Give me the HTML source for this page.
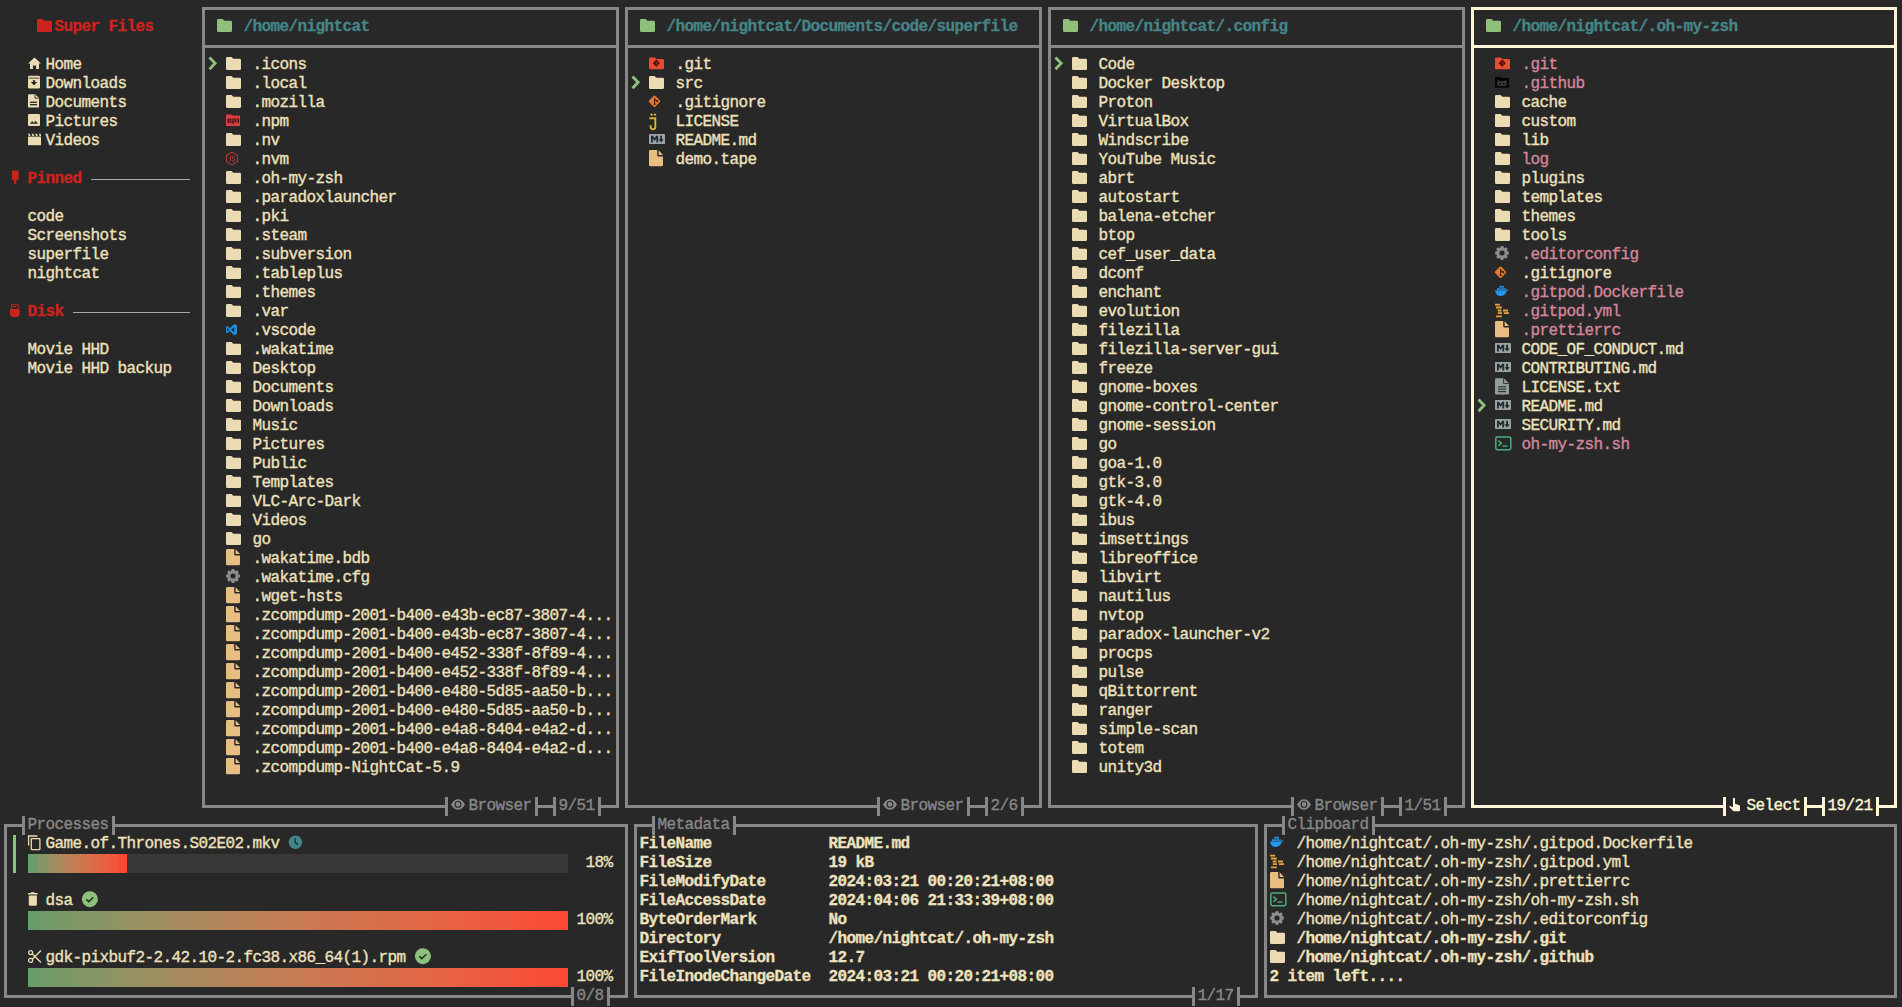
<!DOCTYPE html>
<html><head><meta charset="utf-8"><style>
html,body{margin:0;padding:0;background:#282828;}
body{width:1902px;height:1007px;overflow:hidden;position:relative;}
.t{position:absolute;font-family:"Liberation Mono",monospace;font-size:16px;letter-spacing:-0.6px;line-height:19px;white-space:pre;-webkit-text-stroke:0.35px currentColor;}
.b{font-weight:bold;-webkit-text-stroke:0.3px currentColor;}
.r{position:absolute;}
.i{position:absolute;overflow:visible;}
</style></head><body>
<svg class="i" style="left:34px;top:15px" width="24" height="24"><g transform="translate(3 3)"><path d="M0 2.3Q0 1 1.3 1H5.6L7.3 2.8H13.7Q15 2.8 15 4.1V12.7Q15 14 13.7 14H1.3Q0 14 0 12.7Z" fill="#cc241d"/></g></svg><div class="t b" style="left:54.5px;top:18px;color:#cc241d;">Super Files</div><svg class="i" style="left:25px;top:53px" width="24" height="24"><g transform="translate(3 3)"><path d="M6.5 1.5L13 7.6H11V13H8.1V9.6H4.9V13H2V7.6H0Z" fill="#ebdbb2"/></g></svg><div class="t" style="left:45.5px;top:56px;color:#eee1bd;">Home</div><svg class="i" style="left:25px;top:72px" width="24" height="24"><g transform="translate(3 3)"><path d="M1.2 0.8H10.8Q12 0.8 12 2V12.3Q12 13.5 10.8 13.5H1.2Q0 13.5 0 12.3V2Q0 0.8 1.2 0.8Z" fill="#ebdbb2"/><rect x="0.6" y="2.7" width="10.8" height="0.8" fill="#282828"/><path d="M2.8 7H9.2L6 10.4Z" fill="#282828"/><rect x="4.9" y="5.2" width="2.2" height="2.4" fill="#282828"/></g></svg><div class="t" style="left:45.5px;top:75px;color:#eee1bd;">Downloads</div><svg class="i" style="left:25px;top:91px" width="24" height="24"><g transform="translate(3 3)"><path d="M1.2 0.2H7.2L11 4V12.4Q11 13.6 9.8 13.6H1.2Q0 13.6 0 12.4V1.4Q0 0.2 1.2 0.2Z" fill="#ebdbb2"/><path d="M7 0.6V4.2H10.6" fill="none" stroke="#282828" stroke-width="0.9"/><rect x="2" y="7.6" width="7" height="1.3" fill="#282828"/><rect x="2" y="10" width="7" height="1.3" fill="#282828"/></g></svg><div class="t" style="left:45.5px;top:94px;color:#eee1bd;">Documents</div><svg class="i" style="left:25px;top:110px" width="24" height="24"><g transform="translate(3 3)"><path d="M1.2 1H10.8Q12 1 12 2.2V11.8Q12 13 10.8 13H1.2Q0 13 0 11.8V2.2Q0 1 1.2 1Z" fill="#ebdbb2"/><path d="M2 10.8L4.2 8L5.8 10L7.6 7.8L10 10.8Z" fill="#282828"/></g></svg><div class="t" style="left:45.5px;top:113px;color:#eee1bd;">Pictures</div><svg class="i" style="left:25px;top:129px" width="24" height="24"><g transform="translate(3 3)"><rect x="0" y="4.6" width="13" height="8.6" fill="#ebdbb2"/><path d="M0 1.8H1.8L2.6 4H0.8ZM3.6 1.8H5.4L6.2 4H4.4ZM7.2 1.8H9L9.8 4H8ZM10.8 1.8H12.6L13 3V4H11.6Z" fill="#ebdbb2"/></g></svg><div class="t" style="left:45.5px;top:132px;color:#eee1bd;">Videos</div><svg class="i" style="left:7px;top:167px" width="24" height="24"><g transform="translate(3 3)"><path d="M2 0.5H8.6V7.8L9.2 9.8H1.2L2 7.8Z" fill="#cc241d"/><rect x="3.9" y="9.8" width="2.4" height="4" fill="#cc241d"/></g></svg><div class="t b" style="left:27.5px;top:170px;color:#cc241d;">Pinned</div><div class="r" style="left:91px;top:179px;width:99px;height:1px;background:#a8a8a8;"></div><div class="t" style="left:27.5px;top:208px;color:#eee1bd;">code</div><div class="t" style="left:27.5px;top:227px;color:#eee1bd;">Screenshots</div><div class="t" style="left:27.5px;top:246px;color:#eee1bd;">superfile</div><div class="t" style="left:27.5px;top:265px;color:#eee1bd;">nightcat</div><svg class="i" style="left:7px;top:300px" width="24" height="24"><g transform="translate(3 3)"><path d="M1.1 1.2H8.5V6.2H9.6V10.6Q9.6 14.2 4.8 14.2Q0 14.2 0 10.6V6.2H1.1Z" fill="#cc241d"/><rect x="2.3" y="2.3" width="5" height="3.6" fill="#3c0c0c"/><circle cx="3.9" cy="3.7" r="0.55" fill="#c99"/><circle cx="5.7" cy="3.7" r="0.55" fill="#c99"/></g></svg><div class="t b" style="left:27.5px;top:303px;color:#cc241d;">Disk</div><div class="r" style="left:73px;top:312px;width:117px;height:1px;background:#a8a8a8;"></div><div class="t" style="left:27.5px;top:341px;color:#eee1bd;">Movie HHD</div><div class="t" style="left:27.5px;top:360px;color:#eee1bd;">Movie HHD backup</div><div class="r" style="left:202px;top:7px;width:417px;height:3px;background:#878787;"></div><div class="r" style="left:202px;top:45px;width:417px;height:3px;background:#878787;"></div><div class="r" style="left:202px;top:7px;width:3px;height:801px;background:#878787;"></div><div class="r" style="left:616px;top:7px;width:3px;height:801px;background:#878787;"></div><svg class="i" style="left:214px;top:15px" width="24" height="24"><g transform="translate(3 3)"><path d="M0 2.3Q0 1 1.3 1H5.6L7.3 2.8H13.7Q15 2.8 15 4.1V12.7Q15 14 13.7 14H1.3Q0 14 0 12.7Z" fill="#8ec07c"/></g></svg><div class="t b" style="left:243.5px;top:18px;color:#458588;">/home/nightcat</div><svg class="i" style="left:205px;top:53px" width="24" height="24"><g transform="translate(3 3)"><path d="M1.5 1.4L7.1 7.3L1.5 13.2" fill="none" stroke="#8ec07c" stroke-width="2.9" stroke-linejoin="miter"/></g></svg><svg class="i" style="left:223px;top:53px" width="24" height="24"><g transform="translate(3 3)"><path d="M0 2.3Q0 1 1.3 1H5.6L7.3 2.8H13.7Q15 2.8 15 4.1V12.7Q15 14 13.7 14H1.3Q0 14 0 12.7Z" fill="#ebdbb2"/></g></svg><div class="t" style="left:252.5px;top:56px;color:#eee1bd;">.icons</div><svg class="i" style="left:223px;top:72px" width="24" height="24"><g transform="translate(3 3)"><path d="M0 2.3Q0 1 1.3 1H5.6L7.3 2.8H13.7Q15 2.8 15 4.1V12.7Q15 14 13.7 14H1.3Q0 14 0 12.7Z" fill="#ebdbb2"/></g></svg><div class="t" style="left:252.5px;top:75px;color:#eee1bd;">.local</div><svg class="i" style="left:223px;top:91px" width="24" height="24"><g transform="translate(3 3)"><path d="M0 2.3Q0 1 1.3 1H5.6L7.3 2.8H13.7Q15 2.8 15 4.1V12.7Q15 14 13.7 14H1.3Q0 14 0 12.7Z" fill="#ebdbb2"/></g></svg><div class="t" style="left:252.5px;top:94px;color:#eee1bd;">.mozilla</div><svg class="i" style="left:223px;top:110px" width="24" height="24"><g transform="translate(3 3)"><path d="M0 1.5H5.5L6.5 2.6H14V13H0Z" fill="#d84040"/><path d="M1.5 5.5H5.5V10H4.3V6.6H3.7V10H1.5ZM6.2 5.5H10V9H8.2V10.8H6.2ZM7.6 6.6V8H8.6V6.6ZM10.6 5.5H13V10H12V6.6H11.6V10H10.6Z" fill="#5b1515"/></g></svg><div class="t" style="left:252.5px;top:113px;color:#eee1bd;">.npm</div><svg class="i" style="left:223px;top:129px" width="24" height="24"><g transform="translate(3 3)"><path d="M0 2.3Q0 1 1.3 1H5.6L7.3 2.8H13.7Q15 2.8 15 4.1V12.7Q15 14 13.7 14H1.3Q0 14 0 12.7Z" fill="#ebdbb2"/></g></svg><div class="t" style="left:252.5px;top:132px;color:#eee1bd;">.nv</div><svg class="i" style="left:223px;top:148px" width="24" height="24"><g transform="translate(3 3)"><path d="M6 1.2L11.5 4.3V10.8L6 13.9L0.5 10.8V4.3Z" fill="none" stroke="#b03a3a" stroke-width="1.1"/><path d="M4.4 5V9.2Q4.4 10.3 3.2 10.2M8.8 5.4H7.1Q6.3 5.4 6.3 6.2V6.9Q6.3 7.6 7.1 7.6H7.9Q8.7 7.6 8.7 8.4V9.3Q8.7 10.1 7.9 10.1H6.2" fill="none" stroke="#b03a3a" stroke-width="1"/></g></svg><div class="t" style="left:252.5px;top:151px;color:#eee1bd;">.nvm</div><svg class="i" style="left:223px;top:167px" width="24" height="24"><g transform="translate(3 3)"><path d="M0 2.3Q0 1 1.3 1H5.6L7.3 2.8H13.7Q15 2.8 15 4.1V12.7Q15 14 13.7 14H1.3Q0 14 0 12.7Z" fill="#ebdbb2"/></g></svg><div class="t" style="left:252.5px;top:170px;color:#eee1bd;">.oh-my-zsh</div><svg class="i" style="left:223px;top:186px" width="24" height="24"><g transform="translate(3 3)"><path d="M0 2.3Q0 1 1.3 1H5.6L7.3 2.8H13.7Q15 2.8 15 4.1V12.7Q15 14 13.7 14H1.3Q0 14 0 12.7Z" fill="#ebdbb2"/></g></svg><div class="t" style="left:252.5px;top:189px;color:#eee1bd;">.paradoxlauncher</div><svg class="i" style="left:223px;top:205px" width="24" height="24"><g transform="translate(3 3)"><path d="M0 2.3Q0 1 1.3 1H5.6L7.3 2.8H13.7Q15 2.8 15 4.1V12.7Q15 14 13.7 14H1.3Q0 14 0 12.7Z" fill="#ebdbb2"/></g></svg><div class="t" style="left:252.5px;top:208px;color:#eee1bd;">.pki</div><svg class="i" style="left:223px;top:224px" width="24" height="24"><g transform="translate(3 3)"><path d="M0 2.3Q0 1 1.3 1H5.6L7.3 2.8H13.7Q15 2.8 15 4.1V12.7Q15 14 13.7 14H1.3Q0 14 0 12.7Z" fill="#ebdbb2"/></g></svg><div class="t" style="left:252.5px;top:227px;color:#eee1bd;">.steam</div><svg class="i" style="left:223px;top:243px" width="24" height="24"><g transform="translate(3 3)"><path d="M0 2.3Q0 1 1.3 1H5.6L7.3 2.8H13.7Q15 2.8 15 4.1V12.7Q15 14 13.7 14H1.3Q0 14 0 12.7Z" fill="#ebdbb2"/></g></svg><div class="t" style="left:252.5px;top:246px;color:#eee1bd;">.subversion</div><svg class="i" style="left:223px;top:262px" width="24" height="24"><g transform="translate(3 3)"><path d="M0 2.3Q0 1 1.3 1H5.6L7.3 2.8H13.7Q15 2.8 15 4.1V12.7Q15 14 13.7 14H1.3Q0 14 0 12.7Z" fill="#ebdbb2"/></g></svg><div class="t" style="left:252.5px;top:265px;color:#eee1bd;">.tableplus</div><svg class="i" style="left:223px;top:281px" width="24" height="24"><g transform="translate(3 3)"><path d="M0 2.3Q0 1 1.3 1H5.6L7.3 2.8H13.7Q15 2.8 15 4.1V12.7Q15 14 13.7 14H1.3Q0 14 0 12.7Z" fill="#ebdbb2"/></g></svg><div class="t" style="left:252.5px;top:284px;color:#eee1bd;">.themes</div><svg class="i" style="left:223px;top:300px" width="24" height="24"><g transform="translate(3 3)"><path d="M0 2.3Q0 1 1.3 1H5.6L7.3 2.8H13.7Q15 2.8 15 4.1V12.7Q15 14 13.7 14H1.3Q0 14 0 12.7Z" fill="#ebdbb2"/></g></svg><div class="t" style="left:252.5px;top:303px;color:#eee1bd;">.var</div><svg class="i" style="left:223px;top:319px" width="24" height="24"><g transform="translate(3 3)"><path d="M8.2 2L11 3.3V12L8.2 13.3L3.8 9.3L1.3 11.2L0 10.5V4.8L1.3 4.1L3.8 6ZM1.3 5.9V9.4L3.2 7.65ZM8.2 5.1L5.4 7.65L8.2 10.2Z" fill="#1f8ad8" fill-rule="evenodd"/></g></svg><div class="t" style="left:252.5px;top:322px;color:#eee1bd;">.vscode</div><svg class="i" style="left:223px;top:338px" width="24" height="24"><g transform="translate(3 3)"><path d="M0 2.3Q0 1 1.3 1H5.6L7.3 2.8H13.7Q15 2.8 15 4.1V12.7Q15 14 13.7 14H1.3Q0 14 0 12.7Z" fill="#ebdbb2"/></g></svg><div class="t" style="left:252.5px;top:341px;color:#eee1bd;">.wakatime</div><svg class="i" style="left:223px;top:357px" width="24" height="24"><g transform="translate(3 3)"><path d="M0 2.3Q0 1 1.3 1H5.6L7.3 2.8H13.7Q15 2.8 15 4.1V12.7Q15 14 13.7 14H1.3Q0 14 0 12.7Z" fill="#ebdbb2"/></g></svg><div class="t" style="left:252.5px;top:360px;color:#eee1bd;">Desktop</div><svg class="i" style="left:223px;top:376px" width="24" height="24"><g transform="translate(3 3)"><path d="M0 2.3Q0 1 1.3 1H5.6L7.3 2.8H13.7Q15 2.8 15 4.1V12.7Q15 14 13.7 14H1.3Q0 14 0 12.7Z" fill="#ebdbb2"/></g></svg><div class="t" style="left:252.5px;top:379px;color:#eee1bd;">Documents</div><svg class="i" style="left:223px;top:395px" width="24" height="24"><g transform="translate(3 3)"><path d="M0 2.3Q0 1 1.3 1H5.6L7.3 2.8H13.7Q15 2.8 15 4.1V12.7Q15 14 13.7 14H1.3Q0 14 0 12.7Z" fill="#ebdbb2"/></g></svg><div class="t" style="left:252.5px;top:398px;color:#eee1bd;">Downloads</div><svg class="i" style="left:223px;top:414px" width="24" height="24"><g transform="translate(3 3)"><path d="M0 2.3Q0 1 1.3 1H5.6L7.3 2.8H13.7Q15 2.8 15 4.1V12.7Q15 14 13.7 14H1.3Q0 14 0 12.7Z" fill="#ebdbb2"/></g></svg><div class="t" style="left:252.5px;top:417px;color:#eee1bd;">Music</div><svg class="i" style="left:223px;top:433px" width="24" height="24"><g transform="translate(3 3)"><path d="M0 2.3Q0 1 1.3 1H5.6L7.3 2.8H13.7Q15 2.8 15 4.1V12.7Q15 14 13.7 14H1.3Q0 14 0 12.7Z" fill="#ebdbb2"/></g></svg><div class="t" style="left:252.5px;top:436px;color:#eee1bd;">Pictures</div><svg class="i" style="left:223px;top:452px" width="24" height="24"><g transform="translate(3 3)"><path d="M0 2.3Q0 1 1.3 1H5.6L7.3 2.8H13.7Q15 2.8 15 4.1V12.7Q15 14 13.7 14H1.3Q0 14 0 12.7Z" fill="#ebdbb2"/></g></svg><div class="t" style="left:252.5px;top:455px;color:#eee1bd;">Public</div><svg class="i" style="left:223px;top:471px" width="24" height="24"><g transform="translate(3 3)"><path d="M0 2.3Q0 1 1.3 1H5.6L7.3 2.8H13.7Q15 2.8 15 4.1V12.7Q15 14 13.7 14H1.3Q0 14 0 12.7Z" fill="#ebdbb2"/></g></svg><div class="t" style="left:252.5px;top:474px;color:#eee1bd;">Templates</div><svg class="i" style="left:223px;top:490px" width="24" height="24"><g transform="translate(3 3)"><path d="M0 2.3Q0 1 1.3 1H5.6L7.3 2.8H13.7Q15 2.8 15 4.1V12.7Q15 14 13.7 14H1.3Q0 14 0 12.7Z" fill="#ebdbb2"/></g></svg><div class="t" style="left:252.5px;top:493px;color:#eee1bd;">VLC-Arc-Dark</div><svg class="i" style="left:223px;top:509px" width="24" height="24"><g transform="translate(3 3)"><path d="M0 2.3Q0 1 1.3 1H5.6L7.3 2.8H13.7Q15 2.8 15 4.1V12.7Q15 14 13.7 14H1.3Q0 14 0 12.7Z" fill="#ebdbb2"/></g></svg><div class="t" style="left:252.5px;top:512px;color:#eee1bd;">Videos</div><svg class="i" style="left:223px;top:528px" width="24" height="24"><g transform="translate(3 3)"><path d="M0 2.3Q0 1 1.3 1H5.6L7.3 2.8H13.7Q15 2.8 15 4.1V12.7Q15 14 13.7 14H1.3Q0 14 0 12.7Z" fill="#ebdbb2"/></g></svg><div class="t" style="left:252.5px;top:531px;color:#eee1bd;">go</div><svg class="i" style="left:223px;top:547px" width="24" height="24"><g transform="translate(3 3)"><path d="M0 0.2Q0 -1 1.2 -1H8.2V4.2Q8.2 5.4 9.4 5.4H14V14.1Q14 15.3 12.8 15.3H1.2Q0 15.3 0 14.1Z" fill="#e8bd82"/><path d="M9.6 -0.8L14 3.9H9.6Z" fill="#e8bd82"/></g></svg><div class="t" style="left:252.5px;top:550px;color:#eee1bd;">.wakatime.bdb</div><svg class="i" style="left:223px;top:566px" width="24" height="24"><g transform="translate(3 3)"><path d="M11.94 5.07 L13.89 5.77 L13.89 8.23 L11.94 8.93 L11.86 9.12 L12.74 11.00 L11.00 12.74 L9.12 11.86 L8.93 11.94 L8.23 13.89 L5.77 13.89 L5.07 11.94 L4.88 11.86 L3.00 12.74 L1.26 11.00 L2.14 9.12 L2.06 8.93 L0.11 8.23 L0.11 5.77 L2.06 5.07 L2.14 4.88 L1.26 3.00 L3.00 1.26 L4.88 2.14 L5.07 2.06 L5.77 0.11 L8.23 0.11 L8.93 2.06 L9.12 2.14 L11.00 1.26 L12.74 3.00 L11.86 4.88Z" fill="#8c8c8c"/><circle cx="7" cy="7" r="2.6" fill="#282828"/></g></svg><div class="t" style="left:252.5px;top:569px;color:#eee1bd;">.wakatime.cfg</div><svg class="i" style="left:223px;top:585px" width="24" height="24"><g transform="translate(3 3)"><path d="M0 0.2Q0 -1 1.2 -1H8.2V4.2Q8.2 5.4 9.4 5.4H14V14.1Q14 15.3 12.8 15.3H1.2Q0 15.3 0 14.1Z" fill="#e8bd82"/><path d="M9.6 -0.8L14 3.9H9.6Z" fill="#e8bd82"/></g></svg><div class="t" style="left:252.5px;top:588px;color:#eee1bd;">.wget-hsts</div><svg class="i" style="left:223px;top:604px" width="24" height="24"><g transform="translate(3 3)"><path d="M0 0.2Q0 -1 1.2 -1H8.2V4.2Q8.2 5.4 9.4 5.4H14V14.1Q14 15.3 12.8 15.3H1.2Q0 15.3 0 14.1Z" fill="#e8bd82"/><path d="M9.6 -0.8L14 3.9H9.6Z" fill="#e8bd82"/></g></svg><div class="t" style="left:252.5px;top:607px;color:#eee1bd;">.zcompdump-2001-b400-e43b-ec87-3807-4...</div><svg class="i" style="left:223px;top:623px" width="24" height="24"><g transform="translate(3 3)"><path d="M0 0.2Q0 -1 1.2 -1H8.2V4.2Q8.2 5.4 9.4 5.4H14V14.1Q14 15.3 12.8 15.3H1.2Q0 15.3 0 14.1Z" fill="#e8bd82"/><path d="M9.6 -0.8L14 3.9H9.6Z" fill="#e8bd82"/></g></svg><div class="t" style="left:252.5px;top:626px;color:#eee1bd;">.zcompdump-2001-b400-e43b-ec87-3807-4...</div><svg class="i" style="left:223px;top:642px" width="24" height="24"><g transform="translate(3 3)"><path d="M0 0.2Q0 -1 1.2 -1H8.2V4.2Q8.2 5.4 9.4 5.4H14V14.1Q14 15.3 12.8 15.3H1.2Q0 15.3 0 14.1Z" fill="#e8bd82"/><path d="M9.6 -0.8L14 3.9H9.6Z" fill="#e8bd82"/></g></svg><div class="t" style="left:252.5px;top:645px;color:#eee1bd;">.zcompdump-2001-b400-e452-338f-8f89-4...</div><svg class="i" style="left:223px;top:661px" width="24" height="24"><g transform="translate(3 3)"><path d="M0 0.2Q0 -1 1.2 -1H8.2V4.2Q8.2 5.4 9.4 5.4H14V14.1Q14 15.3 12.8 15.3H1.2Q0 15.3 0 14.1Z" fill="#e8bd82"/><path d="M9.6 -0.8L14 3.9H9.6Z" fill="#e8bd82"/></g></svg><div class="t" style="left:252.5px;top:664px;color:#eee1bd;">.zcompdump-2001-b400-e452-338f-8f89-4...</div><svg class="i" style="left:223px;top:680px" width="24" height="24"><g transform="translate(3 3)"><path d="M0 0.2Q0 -1 1.2 -1H8.2V4.2Q8.2 5.4 9.4 5.4H14V14.1Q14 15.3 12.8 15.3H1.2Q0 15.3 0 14.1Z" fill="#e8bd82"/><path d="M9.6 -0.8L14 3.9H9.6Z" fill="#e8bd82"/></g></svg><div class="t" style="left:252.5px;top:683px;color:#eee1bd;">.zcompdump-2001-b400-e480-5d85-aa50-b...</div><svg class="i" style="left:223px;top:699px" width="24" height="24"><g transform="translate(3 3)"><path d="M0 0.2Q0 -1 1.2 -1H8.2V4.2Q8.2 5.4 9.4 5.4H14V14.1Q14 15.3 12.8 15.3H1.2Q0 15.3 0 14.1Z" fill="#e8bd82"/><path d="M9.6 -0.8L14 3.9H9.6Z" fill="#e8bd82"/></g></svg><div class="t" style="left:252.5px;top:702px;color:#eee1bd;">.zcompdump-2001-b400-e480-5d85-aa50-b...</div><svg class="i" style="left:223px;top:718px" width="24" height="24"><g transform="translate(3 3)"><path d="M0 0.2Q0 -1 1.2 -1H8.2V4.2Q8.2 5.4 9.4 5.4H14V14.1Q14 15.3 12.8 15.3H1.2Q0 15.3 0 14.1Z" fill="#e8bd82"/><path d="M9.6 -0.8L14 3.9H9.6Z" fill="#e8bd82"/></g></svg><div class="t" style="left:252.5px;top:721px;color:#eee1bd;">.zcompdump-2001-b400-e4a8-8404-e4a2-d...</div><svg class="i" style="left:223px;top:737px" width="24" height="24"><g transform="translate(3 3)"><path d="M0 0.2Q0 -1 1.2 -1H8.2V4.2Q8.2 5.4 9.4 5.4H14V14.1Q14 15.3 12.8 15.3H1.2Q0 15.3 0 14.1Z" fill="#e8bd82"/><path d="M9.6 -0.8L14 3.9H9.6Z" fill="#e8bd82"/></g></svg><div class="t" style="left:252.5px;top:740px;color:#eee1bd;">.zcompdump-2001-b400-e4a8-8404-e4a2-d...</div><svg class="i" style="left:223px;top:756px" width="24" height="24"><g transform="translate(3 3)"><path d="M0 0.2Q0 -1 1.2 -1H8.2V4.2Q8.2 5.4 9.4 5.4H14V14.1Q14 15.3 12.8 15.3H1.2Q0 15.3 0 14.1Z" fill="#e8bd82"/><path d="M9.6 -0.8L14 3.9H9.6Z" fill="#e8bd82"/></g></svg><div class="t" style="left:252.5px;top:759px;color:#eee1bd;">.zcompdump-NightCat-5.9</div><div class="r" style="left:202px;top:805px;width:246px;height:3px;background:#878787;"></div><div class="r" style="left:535px;top:805px;width:21px;height:3px;background:#878787;"></div><div class="r" style="left:598px;top:805px;width:21px;height:3px;background:#878787;"></div><div class="r" style="left:445px;top:797px;width:3px;height:19px;background:#878787;"></div><div class="r" style="left:535px;top:797px;width:3px;height:19px;background:#878787;"></div><div class="r" style="left:553px;top:797px;width:3px;height:19px;background:#878787;"></div><div class="r" style="left:598px;top:797px;width:3px;height:19px;background:#878787;"></div><svg class="i" style="left:448px;top:794px" width="24" height="24"><g transform="translate(3 3)"><path d="M0 7.4Q3 2.2 7 2.2Q11 2.2 14 7.4Q11 12.7 7 12.7Q3 12.7 0 7.4Z" fill="#878787"/><circle cx="7" cy="7.4" r="2.9" fill="none" stroke="#282828" stroke-width="1.1"/></g></svg><div class="t" style="left:468.5px;top:797px;color:#878787;">Browser</div><div class="t" style="left:558.5px;top:797px;color:#878787;">9/51</div><div class="r" style="left:625px;top:7px;width:417px;height:3px;background:#878787;"></div><div class="r" style="left:625px;top:45px;width:417px;height:3px;background:#878787;"></div><div class="r" style="left:625px;top:7px;width:3px;height:801px;background:#878787;"></div><div class="r" style="left:1039px;top:7px;width:3px;height:801px;background:#878787;"></div><svg class="i" style="left:637px;top:15px" width="24" height="24"><g transform="translate(3 3)"><path d="M0 2.3Q0 1 1.3 1H5.6L7.3 2.8H13.7Q15 2.8 15 4.1V12.7Q15 14 13.7 14H1.3Q0 14 0 12.7Z" fill="#8ec07c"/></g></svg><div class="t b" style="left:666.5px;top:18px;color:#458588;">/home/nightcat/Documents/code/superfile</div><svg class="i" style="left:646px;top:53px" width="24" height="24"><g transform="translate(3 3)"><path d="M0 2.7Q0 1.4 1.3 1.4H5.6L7.3 3H13.7Q15 3 15 4.3V12Q15 13.3 13.7 13.3H1.3Q0 13.3 0 12Z" fill="#e84d31"/><path d="M7.3 3.6L10.8 7.2L7.3 10.8L3.7 7.2Z" fill="#4a0f0a"/><path d="M6.6 5.6L8 7.4V9M7.4 6.4L8.4 7.2" stroke="#e84d31" stroke-width="0.6" fill="none"/></g></svg><div class="t" style="left:675.5px;top:56px;color:#eee1bd;">.git</div><svg class="i" style="left:628px;top:72px" width="24" height="24"><g transform="translate(3 3)"><path d="M1.5 1.4L7.1 7.3L1.5 13.2" fill="none" stroke="#8ec07c" stroke-width="2.9" stroke-linejoin="miter"/></g></svg><svg class="i" style="left:646px;top:72px" width="24" height="24"><g transform="translate(3 3)"><path d="M0 2.3Q0 1 1.3 1H5.6L7.3 2.8H13.7Q15 2.8 15 4.1V12.7Q15 14 13.7 14H1.3Q0 14 0 12.7Z" fill="#ebdbb2"/></g></svg><div class="t" style="left:675.5px;top:75px;color:#eee1bd;">src</div><svg class="i" style="left:646px;top:91px" width="24" height="24"><g transform="translate(3 3)"><path d="M5.5 1.6Q6 1.6 6.5 2.1L10.7 6.3Q11.2 6.8 11.2 7.3Q11.2 7.8 10.7 8.3L6.5 12.5Q6 13 5.5 13Q5 13 4.5 12.5L0.3 8.3Q-0.2 7.8 -0.2 7.3Q-0.2 6.8 0.3 6.3L4.5 2.1Q5 1.6 5.5 1.6Z" fill="#e8762c"/><path d="M5.6 4V10.6M5.6 5.4L8.4 7.3" stroke="#3a1a05" stroke-width="1.1" fill="none"/><circle cx="5.6" cy="10.2" r="0.9" fill="#3a1a05"/><circle cx="8.4" cy="7.3" r="1" fill="#3a1a05"/></g></svg><div class="t" style="left:675.5px;top:94px;color:#eee1bd;">.gitignore</div><svg class="i" style="left:646px;top:110px" width="24" height="24"><g transform="translate(3 3)"><circle cx="2.6" cy="1.6" r="1.2" fill="#d6b13a"/><circle cx="6" cy="1.6" r="1.2" fill="#d6b13a"/><path d="M0.4 5.2H6.3V13.4Q6.3 16.3 3.9 16.3Q1.6 16.3 1.6 13.8V12.2" fill="none" stroke="#d6b13a" stroke-width="1.9"/></g></svg><div class="t" style="left:675.5px;top:113px;color:#eee1bd;">LICENSE</div><svg class="i" style="left:646px;top:129px" width="24" height="24"><g transform="translate(3 3)"><rect x="0" y="2" width="16" height="10" rx="0.8" fill="#9aa3a4"/><path d="M2 10.4V3.8H4L5.6 6.2L7.2 3.8H9.2V10.4H7.4V6.6L5.6 9L3.8 6.6V10.4Z" fill="#1f2a2e"/><path d="M11.2 3.8H13V7.2H14.6L12.1 10.6L9.6 7.2H11.2Z" fill="#1f2a2e"/></g></svg><div class="t" style="left:675.5px;top:132px;color:#eee1bd;">README.md</div><svg class="i" style="left:646px;top:148px" width="24" height="24"><g transform="translate(3 3)"><path d="M0 0.2Q0 -1 1.2 -1H8.2V4.2Q8.2 5.4 9.4 5.4H14V14.1Q14 15.3 12.8 15.3H1.2Q0 15.3 0 14.1Z" fill="#e8bd82"/><path d="M9.6 -0.8L14 3.9H9.6Z" fill="#e8bd82"/></g></svg><div class="t" style="left:675.5px;top:151px;color:#eee1bd;">demo.tape</div><div class="r" style="left:625px;top:805px;width:255px;height:3px;background:#878787;"></div><div class="r" style="left:967px;top:805px;width:21px;height:3px;background:#878787;"></div><div class="r" style="left:1021px;top:805px;width:21px;height:3px;background:#878787;"></div><div class="r" style="left:877px;top:797px;width:3px;height:19px;background:#878787;"></div><div class="r" style="left:967px;top:797px;width:3px;height:19px;background:#878787;"></div><div class="r" style="left:985px;top:797px;width:3px;height:19px;background:#878787;"></div><div class="r" style="left:1021px;top:797px;width:3px;height:19px;background:#878787;"></div><svg class="i" style="left:880px;top:794px" width="24" height="24"><g transform="translate(3 3)"><path d="M0 7.4Q3 2.2 7 2.2Q11 2.2 14 7.4Q11 12.7 7 12.7Q3 12.7 0 7.4Z" fill="#878787"/><circle cx="7" cy="7.4" r="2.9" fill="none" stroke="#282828" stroke-width="1.1"/></g></svg><div class="t" style="left:900.5px;top:797px;color:#878787;">Browser</div><div class="t" style="left:990.5px;top:797px;color:#878787;">2/6</div><div class="r" style="left:1048px;top:7px;width:417px;height:3px;background:#878787;"></div><div class="r" style="left:1048px;top:45px;width:417px;height:3px;background:#878787;"></div><div class="r" style="left:1048px;top:7px;width:3px;height:801px;background:#878787;"></div><div class="r" style="left:1462px;top:7px;width:3px;height:801px;background:#878787;"></div><svg class="i" style="left:1060px;top:15px" width="24" height="24"><g transform="translate(3 3)"><path d="M0 2.3Q0 1 1.3 1H5.6L7.3 2.8H13.7Q15 2.8 15 4.1V12.7Q15 14 13.7 14H1.3Q0 14 0 12.7Z" fill="#8ec07c"/></g></svg><div class="t b" style="left:1089.5px;top:18px;color:#458588;">/home/nightcat/.config</div><svg class="i" style="left:1051px;top:53px" width="24" height="24"><g transform="translate(3 3)"><path d="M1.5 1.4L7.1 7.3L1.5 13.2" fill="none" stroke="#8ec07c" stroke-width="2.9" stroke-linejoin="miter"/></g></svg><svg class="i" style="left:1069px;top:53px" width="24" height="24"><g transform="translate(3 3)"><path d="M0 2.3Q0 1 1.3 1H5.6L7.3 2.8H13.7Q15 2.8 15 4.1V12.7Q15 14 13.7 14H1.3Q0 14 0 12.7Z" fill="#ebdbb2"/></g></svg><div class="t" style="left:1098.5px;top:56px;color:#eee1bd;">Code</div><svg class="i" style="left:1069px;top:72px" width="24" height="24"><g transform="translate(3 3)"><path d="M0 2.3Q0 1 1.3 1H5.6L7.3 2.8H13.7Q15 2.8 15 4.1V12.7Q15 14 13.7 14H1.3Q0 14 0 12.7Z" fill="#ebdbb2"/></g></svg><div class="t" style="left:1098.5px;top:75px;color:#eee1bd;">Docker Desktop</div><svg class="i" style="left:1069px;top:91px" width="24" height="24"><g transform="translate(3 3)"><path d="M0 2.3Q0 1 1.3 1H5.6L7.3 2.8H13.7Q15 2.8 15 4.1V12.7Q15 14 13.7 14H1.3Q0 14 0 12.7Z" fill="#ebdbb2"/></g></svg><div class="t" style="left:1098.5px;top:94px;color:#eee1bd;">Proton</div><svg class="i" style="left:1069px;top:110px" width="24" height="24"><g transform="translate(3 3)"><path d="M0 2.3Q0 1 1.3 1H5.6L7.3 2.8H13.7Q15 2.8 15 4.1V12.7Q15 14 13.7 14H1.3Q0 14 0 12.7Z" fill="#ebdbb2"/></g></svg><div class="t" style="left:1098.5px;top:113px;color:#eee1bd;">VirtualBox</div><svg class="i" style="left:1069px;top:129px" width="24" height="24"><g transform="translate(3 3)"><path d="M0 2.3Q0 1 1.3 1H5.6L7.3 2.8H13.7Q15 2.8 15 4.1V12.7Q15 14 13.7 14H1.3Q0 14 0 12.7Z" fill="#ebdbb2"/></g></svg><div class="t" style="left:1098.5px;top:132px;color:#eee1bd;">Windscribe</div><svg class="i" style="left:1069px;top:148px" width="24" height="24"><g transform="translate(3 3)"><path d="M0 2.3Q0 1 1.3 1H5.6L7.3 2.8H13.7Q15 2.8 15 4.1V12.7Q15 14 13.7 14H1.3Q0 14 0 12.7Z" fill="#ebdbb2"/></g></svg><div class="t" style="left:1098.5px;top:151px;color:#eee1bd;">YouTube Music</div><svg class="i" style="left:1069px;top:167px" width="24" height="24"><g transform="translate(3 3)"><path d="M0 2.3Q0 1 1.3 1H5.6L7.3 2.8H13.7Q15 2.8 15 4.1V12.7Q15 14 13.7 14H1.3Q0 14 0 12.7Z" fill="#ebdbb2"/></g></svg><div class="t" style="left:1098.5px;top:170px;color:#eee1bd;">abrt</div><svg class="i" style="left:1069px;top:186px" width="24" height="24"><g transform="translate(3 3)"><path d="M0 2.3Q0 1 1.3 1H5.6L7.3 2.8H13.7Q15 2.8 15 4.1V12.7Q15 14 13.7 14H1.3Q0 14 0 12.7Z" fill="#ebdbb2"/></g></svg><div class="t" style="left:1098.5px;top:189px;color:#eee1bd;">autostart</div><svg class="i" style="left:1069px;top:205px" width="24" height="24"><g transform="translate(3 3)"><path d="M0 2.3Q0 1 1.3 1H5.6L7.3 2.8H13.7Q15 2.8 15 4.1V12.7Q15 14 13.7 14H1.3Q0 14 0 12.7Z" fill="#ebdbb2"/></g></svg><div class="t" style="left:1098.5px;top:208px;color:#eee1bd;">balena-etcher</div><svg class="i" style="left:1069px;top:224px" width="24" height="24"><g transform="translate(3 3)"><path d="M0 2.3Q0 1 1.3 1H5.6L7.3 2.8H13.7Q15 2.8 15 4.1V12.7Q15 14 13.7 14H1.3Q0 14 0 12.7Z" fill="#ebdbb2"/></g></svg><div class="t" style="left:1098.5px;top:227px;color:#eee1bd;">btop</div><svg class="i" style="left:1069px;top:243px" width="24" height="24"><g transform="translate(3 3)"><path d="M0 2.3Q0 1 1.3 1H5.6L7.3 2.8H13.7Q15 2.8 15 4.1V12.7Q15 14 13.7 14H1.3Q0 14 0 12.7Z" fill="#ebdbb2"/></g></svg><div class="t" style="left:1098.5px;top:246px;color:#eee1bd;">cef_user_data</div><svg class="i" style="left:1069px;top:262px" width="24" height="24"><g transform="translate(3 3)"><path d="M0 2.3Q0 1 1.3 1H5.6L7.3 2.8H13.7Q15 2.8 15 4.1V12.7Q15 14 13.7 14H1.3Q0 14 0 12.7Z" fill="#ebdbb2"/></g></svg><div class="t" style="left:1098.5px;top:265px;color:#eee1bd;">dconf</div><svg class="i" style="left:1069px;top:281px" width="24" height="24"><g transform="translate(3 3)"><path d="M0 2.3Q0 1 1.3 1H5.6L7.3 2.8H13.7Q15 2.8 15 4.1V12.7Q15 14 13.7 14H1.3Q0 14 0 12.7Z" fill="#ebdbb2"/></g></svg><div class="t" style="left:1098.5px;top:284px;color:#eee1bd;">enchant</div><svg class="i" style="left:1069px;top:300px" width="24" height="24"><g transform="translate(3 3)"><path d="M0 2.3Q0 1 1.3 1H5.6L7.3 2.8H13.7Q15 2.8 15 4.1V12.7Q15 14 13.7 14H1.3Q0 14 0 12.7Z" fill="#ebdbb2"/></g></svg><div class="t" style="left:1098.5px;top:303px;color:#eee1bd;">evolution</div><svg class="i" style="left:1069px;top:319px" width="24" height="24"><g transform="translate(3 3)"><path d="M0 2.3Q0 1 1.3 1H5.6L7.3 2.8H13.7Q15 2.8 15 4.1V12.7Q15 14 13.7 14H1.3Q0 14 0 12.7Z" fill="#ebdbb2"/></g></svg><div class="t" style="left:1098.5px;top:322px;color:#eee1bd;">filezilla</div><svg class="i" style="left:1069px;top:338px" width="24" height="24"><g transform="translate(3 3)"><path d="M0 2.3Q0 1 1.3 1H5.6L7.3 2.8H13.7Q15 2.8 15 4.1V12.7Q15 14 13.7 14H1.3Q0 14 0 12.7Z" fill="#ebdbb2"/></g></svg><div class="t" style="left:1098.5px;top:341px;color:#eee1bd;">filezilla-server-gui</div><svg class="i" style="left:1069px;top:357px" width="24" height="24"><g transform="translate(3 3)"><path d="M0 2.3Q0 1 1.3 1H5.6L7.3 2.8H13.7Q15 2.8 15 4.1V12.7Q15 14 13.7 14H1.3Q0 14 0 12.7Z" fill="#ebdbb2"/></g></svg><div class="t" style="left:1098.5px;top:360px;color:#eee1bd;">freeze</div><svg class="i" style="left:1069px;top:376px" width="24" height="24"><g transform="translate(3 3)"><path d="M0 2.3Q0 1 1.3 1H5.6L7.3 2.8H13.7Q15 2.8 15 4.1V12.7Q15 14 13.7 14H1.3Q0 14 0 12.7Z" fill="#ebdbb2"/></g></svg><div class="t" style="left:1098.5px;top:379px;color:#eee1bd;">gnome-boxes</div><svg class="i" style="left:1069px;top:395px" width="24" height="24"><g transform="translate(3 3)"><path d="M0 2.3Q0 1 1.3 1H5.6L7.3 2.8H13.7Q15 2.8 15 4.1V12.7Q15 14 13.7 14H1.3Q0 14 0 12.7Z" fill="#ebdbb2"/></g></svg><div class="t" style="left:1098.5px;top:398px;color:#eee1bd;">gnome-control-center</div><svg class="i" style="left:1069px;top:414px" width="24" height="24"><g transform="translate(3 3)"><path d="M0 2.3Q0 1 1.3 1H5.6L7.3 2.8H13.7Q15 2.8 15 4.1V12.7Q15 14 13.7 14H1.3Q0 14 0 12.7Z" fill="#ebdbb2"/></g></svg><div class="t" style="left:1098.5px;top:417px;color:#eee1bd;">gnome-session</div><svg class="i" style="left:1069px;top:433px" width="24" height="24"><g transform="translate(3 3)"><path d="M0 2.3Q0 1 1.3 1H5.6L7.3 2.8H13.7Q15 2.8 15 4.1V12.7Q15 14 13.7 14H1.3Q0 14 0 12.7Z" fill="#ebdbb2"/></g></svg><div class="t" style="left:1098.5px;top:436px;color:#eee1bd;">go</div><svg class="i" style="left:1069px;top:452px" width="24" height="24"><g transform="translate(3 3)"><path d="M0 2.3Q0 1 1.3 1H5.6L7.3 2.8H13.7Q15 2.8 15 4.1V12.7Q15 14 13.7 14H1.3Q0 14 0 12.7Z" fill="#ebdbb2"/></g></svg><div class="t" style="left:1098.5px;top:455px;color:#eee1bd;">goa-1.0</div><svg class="i" style="left:1069px;top:471px" width="24" height="24"><g transform="translate(3 3)"><path d="M0 2.3Q0 1 1.3 1H5.6L7.3 2.8H13.7Q15 2.8 15 4.1V12.7Q15 14 13.7 14H1.3Q0 14 0 12.7Z" fill="#ebdbb2"/></g></svg><div class="t" style="left:1098.5px;top:474px;color:#eee1bd;">gtk-3.0</div><svg class="i" style="left:1069px;top:490px" width="24" height="24"><g transform="translate(3 3)"><path d="M0 2.3Q0 1 1.3 1H5.6L7.3 2.8H13.7Q15 2.8 15 4.1V12.7Q15 14 13.7 14H1.3Q0 14 0 12.7Z" fill="#ebdbb2"/></g></svg><div class="t" style="left:1098.5px;top:493px;color:#eee1bd;">gtk-4.0</div><svg class="i" style="left:1069px;top:509px" width="24" height="24"><g transform="translate(3 3)"><path d="M0 2.3Q0 1 1.3 1H5.6L7.3 2.8H13.7Q15 2.8 15 4.1V12.7Q15 14 13.7 14H1.3Q0 14 0 12.7Z" fill="#ebdbb2"/></g></svg><div class="t" style="left:1098.5px;top:512px;color:#eee1bd;">ibus</div><svg class="i" style="left:1069px;top:528px" width="24" height="24"><g transform="translate(3 3)"><path d="M0 2.3Q0 1 1.3 1H5.6L7.3 2.8H13.7Q15 2.8 15 4.1V12.7Q15 14 13.7 14H1.3Q0 14 0 12.7Z" fill="#ebdbb2"/></g></svg><div class="t" style="left:1098.5px;top:531px;color:#eee1bd;">imsettings</div><svg class="i" style="left:1069px;top:547px" width="24" height="24"><g transform="translate(3 3)"><path d="M0 2.3Q0 1 1.3 1H5.6L7.3 2.8H13.7Q15 2.8 15 4.1V12.7Q15 14 13.7 14H1.3Q0 14 0 12.7Z" fill="#ebdbb2"/></g></svg><div class="t" style="left:1098.5px;top:550px;color:#eee1bd;">libreoffice</div><svg class="i" style="left:1069px;top:566px" width="24" height="24"><g transform="translate(3 3)"><path d="M0 2.3Q0 1 1.3 1H5.6L7.3 2.8H13.7Q15 2.8 15 4.1V12.7Q15 14 13.7 14H1.3Q0 14 0 12.7Z" fill="#ebdbb2"/></g></svg><div class="t" style="left:1098.5px;top:569px;color:#eee1bd;">libvirt</div><svg class="i" style="left:1069px;top:585px" width="24" height="24"><g transform="translate(3 3)"><path d="M0 2.3Q0 1 1.3 1H5.6L7.3 2.8H13.7Q15 2.8 15 4.1V12.7Q15 14 13.7 14H1.3Q0 14 0 12.7Z" fill="#ebdbb2"/></g></svg><div class="t" style="left:1098.5px;top:588px;color:#eee1bd;">nautilus</div><svg class="i" style="left:1069px;top:604px" width="24" height="24"><g transform="translate(3 3)"><path d="M0 2.3Q0 1 1.3 1H5.6L7.3 2.8H13.7Q15 2.8 15 4.1V12.7Q15 14 13.7 14H1.3Q0 14 0 12.7Z" fill="#ebdbb2"/></g></svg><div class="t" style="left:1098.5px;top:607px;color:#eee1bd;">nvtop</div><svg class="i" style="left:1069px;top:623px" width="24" height="24"><g transform="translate(3 3)"><path d="M0 2.3Q0 1 1.3 1H5.6L7.3 2.8H13.7Q15 2.8 15 4.1V12.7Q15 14 13.7 14H1.3Q0 14 0 12.7Z" fill="#ebdbb2"/></g></svg><div class="t" style="left:1098.5px;top:626px;color:#eee1bd;">paradox-launcher-v2</div><svg class="i" style="left:1069px;top:642px" width="24" height="24"><g transform="translate(3 3)"><path d="M0 2.3Q0 1 1.3 1H5.6L7.3 2.8H13.7Q15 2.8 15 4.1V12.7Q15 14 13.7 14H1.3Q0 14 0 12.7Z" fill="#ebdbb2"/></g></svg><div class="t" style="left:1098.5px;top:645px;color:#eee1bd;">procps</div><svg class="i" style="left:1069px;top:661px" width="24" height="24"><g transform="translate(3 3)"><path d="M0 2.3Q0 1 1.3 1H5.6L7.3 2.8H13.7Q15 2.8 15 4.1V12.7Q15 14 13.7 14H1.3Q0 14 0 12.7Z" fill="#ebdbb2"/></g></svg><div class="t" style="left:1098.5px;top:664px;color:#eee1bd;">pulse</div><svg class="i" style="left:1069px;top:680px" width="24" height="24"><g transform="translate(3 3)"><path d="M0 2.3Q0 1 1.3 1H5.6L7.3 2.8H13.7Q15 2.8 15 4.1V12.7Q15 14 13.7 14H1.3Q0 14 0 12.7Z" fill="#ebdbb2"/></g></svg><div class="t" style="left:1098.5px;top:683px;color:#eee1bd;">qBittorrent</div><svg class="i" style="left:1069px;top:699px" width="24" height="24"><g transform="translate(3 3)"><path d="M0 2.3Q0 1 1.3 1H5.6L7.3 2.8H13.7Q15 2.8 15 4.1V12.7Q15 14 13.7 14H1.3Q0 14 0 12.7Z" fill="#ebdbb2"/></g></svg><div class="t" style="left:1098.5px;top:702px;color:#eee1bd;">ranger</div><svg class="i" style="left:1069px;top:718px" width="24" height="24"><g transform="translate(3 3)"><path d="M0 2.3Q0 1 1.3 1H5.6L7.3 2.8H13.7Q15 2.8 15 4.1V12.7Q15 14 13.7 14H1.3Q0 14 0 12.7Z" fill="#ebdbb2"/></g></svg><div class="t" style="left:1098.5px;top:721px;color:#eee1bd;">simple-scan</div><svg class="i" style="left:1069px;top:737px" width="24" height="24"><g transform="translate(3 3)"><path d="M0 2.3Q0 1 1.3 1H5.6L7.3 2.8H13.7Q15 2.8 15 4.1V12.7Q15 14 13.7 14H1.3Q0 14 0 12.7Z" fill="#ebdbb2"/></g></svg><div class="t" style="left:1098.5px;top:740px;color:#eee1bd;">totem</div><svg class="i" style="left:1069px;top:756px" width="24" height="24"><g transform="translate(3 3)"><path d="M0 2.3Q0 1 1.3 1H5.6L7.3 2.8H13.7Q15 2.8 15 4.1V12.7Q15 14 13.7 14H1.3Q0 14 0 12.7Z" fill="#ebdbb2"/></g></svg><div class="t" style="left:1098.5px;top:759px;color:#eee1bd;">unity3d</div><div class="r" style="left:1048px;top:805px;width:246px;height:3px;background:#878787;"></div><div class="r" style="left:1381px;top:805px;width:21px;height:3px;background:#878787;"></div><div class="r" style="left:1444px;top:805px;width:21px;height:3px;background:#878787;"></div><div class="r" style="left:1291px;top:797px;width:3px;height:19px;background:#878787;"></div><div class="r" style="left:1381px;top:797px;width:3px;height:19px;background:#878787;"></div><div class="r" style="left:1399px;top:797px;width:3px;height:19px;background:#878787;"></div><div class="r" style="left:1444px;top:797px;width:3px;height:19px;background:#878787;"></div><svg class="i" style="left:1294px;top:794px" width="24" height="24"><g transform="translate(3 3)"><path d="M0 7.4Q3 2.2 7 2.2Q11 2.2 14 7.4Q11 12.7 7 12.7Q3 12.7 0 7.4Z" fill="#878787"/><circle cx="7" cy="7.4" r="2.9" fill="none" stroke="#282828" stroke-width="1.1"/></g></svg><div class="t" style="left:1314.5px;top:797px;color:#878787;">Browser</div><div class="t" style="left:1404.5px;top:797px;color:#878787;">1/51</div><div class="r" style="left:1471px;top:7px;width:426px;height:3px;background:#fff5d6;"></div><div class="r" style="left:1471px;top:45px;width:426px;height:3px;background:#fff5d6;"></div><div class="r" style="left:1471px;top:7px;width:3px;height:801px;background:#fff5d6;"></div><div class="r" style="left:1894px;top:7px;width:3px;height:801px;background:#fff5d6;"></div><svg class="i" style="left:1483px;top:15px" width="24" height="24"><g transform="translate(3 3)"><path d="M0 2.3Q0 1 1.3 1H5.6L7.3 2.8H13.7Q15 2.8 15 4.1V12.7Q15 14 13.7 14H1.3Q0 14 0 12.7Z" fill="#8ec07c"/></g></svg><div class="t b" style="left:1512.5px;top:18px;color:#458588;">/home/nightcat/.oh-my-zsh</div><svg class="i" style="left:1492px;top:53px" width="24" height="24"><g transform="translate(3 3)"><path d="M0 2.7Q0 1.4 1.3 1.4H5.6L7.3 3H13.7Q15 3 15 4.3V12Q15 13.3 13.7 13.3H1.3Q0 13.3 0 12Z" fill="#e84d31"/><path d="M7.3 3.6L10.8 7.2L7.3 10.8L3.7 7.2Z" fill="#4a0f0a"/><path d="M6.6 5.6L8 7.4V9M7.4 6.4L8.4 7.2" stroke="#e84d31" stroke-width="0.6" fill="none"/></g></svg><div class="t" style="left:1521.5px;top:56px;color:#d3869b;">.git</div><svg class="i" style="left:1492px;top:72px" width="24" height="24"><g transform="translate(3 3)"><path d="M0 2.3Q0 2 0.3 2H5.6L7.3 3H14V12.7H0Z" fill="#050505"/><path d="M3.2 11Q2.2 10 2.4 7.6L2.8 4.8L4.8 6.2H9.2L11.2 4.8L11.6 7.6Q11.8 10 10.8 11Z" fill="#3a3a3a"/><ellipse cx="5.2" cy="9" rx="0.8" ry="1" fill="#050505"/><ellipse cx="8.8" cy="9" rx="0.8" ry="1" fill="#050505"/></g></svg><div class="t" style="left:1521.5px;top:75px;color:#d3869b;">.github</div><svg class="i" style="left:1492px;top:91px" width="24" height="24"><g transform="translate(3 3)"><path d="M0 2.3Q0 1 1.3 1H5.6L7.3 2.8H13.7Q15 2.8 15 4.1V12.7Q15 14 13.7 14H1.3Q0 14 0 12.7Z" fill="#ebdbb2"/></g></svg><div class="t" style="left:1521.5px;top:94px;color:#eee1bd;">cache</div><svg class="i" style="left:1492px;top:110px" width="24" height="24"><g transform="translate(3 3)"><path d="M0 2.3Q0 1 1.3 1H5.6L7.3 2.8H13.7Q15 2.8 15 4.1V12.7Q15 14 13.7 14H1.3Q0 14 0 12.7Z" fill="#ebdbb2"/></g></svg><div class="t" style="left:1521.5px;top:113px;color:#eee1bd;">custom</div><svg class="i" style="left:1492px;top:129px" width="24" height="24"><g transform="translate(3 3)"><path d="M0 2.3Q0 1 1.3 1H5.6L7.3 2.8H13.7Q15 2.8 15 4.1V12.7Q15 14 13.7 14H1.3Q0 14 0 12.7Z" fill="#ebdbb2"/></g></svg><div class="t" style="left:1521.5px;top:132px;color:#eee1bd;">lib</div><svg class="i" style="left:1492px;top:148px" width="24" height="24"><g transform="translate(3 3)"><path d="M0 2.3Q0 1 1.3 1H5.6L7.3 2.8H13.7Q15 2.8 15 4.1V12.7Q15 14 13.7 14H1.3Q0 14 0 12.7Z" fill="#ebdbb2"/></g></svg><div class="t" style="left:1521.5px;top:151px;color:#d3869b;">log</div><svg class="i" style="left:1492px;top:167px" width="24" height="24"><g transform="translate(3 3)"><path d="M0 2.3Q0 1 1.3 1H5.6L7.3 2.8H13.7Q15 2.8 15 4.1V12.7Q15 14 13.7 14H1.3Q0 14 0 12.7Z" fill="#ebdbb2"/></g></svg><div class="t" style="left:1521.5px;top:170px;color:#eee1bd;">plugins</div><svg class="i" style="left:1492px;top:186px" width="24" height="24"><g transform="translate(3 3)"><path d="M0 2.3Q0 1 1.3 1H5.6L7.3 2.8H13.7Q15 2.8 15 4.1V12.7Q15 14 13.7 14H1.3Q0 14 0 12.7Z" fill="#ebdbb2"/></g></svg><div class="t" style="left:1521.5px;top:189px;color:#eee1bd;">templates</div><svg class="i" style="left:1492px;top:205px" width="24" height="24"><g transform="translate(3 3)"><path d="M0 2.3Q0 1 1.3 1H5.6L7.3 2.8H13.7Q15 2.8 15 4.1V12.7Q15 14 13.7 14H1.3Q0 14 0 12.7Z" fill="#ebdbb2"/></g></svg><div class="t" style="left:1521.5px;top:208px;color:#eee1bd;">themes</div><svg class="i" style="left:1492px;top:224px" width="24" height="24"><g transform="translate(3 3)"><path d="M0 2.3Q0 1 1.3 1H5.6L7.3 2.8H13.7Q15 2.8 15 4.1V12.7Q15 14 13.7 14H1.3Q0 14 0 12.7Z" fill="#ebdbb2"/></g></svg><div class="t" style="left:1521.5px;top:227px;color:#eee1bd;">tools</div><svg class="i" style="left:1492px;top:243px" width="24" height="24"><g transform="translate(3 3)"><path d="M11.94 5.07 L13.89 5.77 L13.89 8.23 L11.94 8.93 L11.86 9.12 L12.74 11.00 L11.00 12.74 L9.12 11.86 L8.93 11.94 L8.23 13.89 L5.77 13.89 L5.07 11.94 L4.88 11.86 L3.00 12.74 L1.26 11.00 L2.14 9.12 L2.06 8.93 L0.11 8.23 L0.11 5.77 L2.06 5.07 L2.14 4.88 L1.26 3.00 L3.00 1.26 L4.88 2.14 L5.07 2.06 L5.77 0.11 L8.23 0.11 L8.93 2.06 L9.12 2.14 L11.00 1.26 L12.74 3.00 L11.86 4.88Z" fill="#8c8c8c"/><circle cx="7" cy="7" r="2.6" fill="#282828"/></g></svg><div class="t" style="left:1521.5px;top:246px;color:#d3869b;">.editorconfig</div><svg class="i" style="left:1492px;top:262px" width="24" height="24"><g transform="translate(3 3)"><path d="M5.5 1.6Q6 1.6 6.5 2.1L10.7 6.3Q11.2 6.8 11.2 7.3Q11.2 7.8 10.7 8.3L6.5 12.5Q6 13 5.5 13Q5 13 4.5 12.5L0.3 8.3Q-0.2 7.8 -0.2 7.3Q-0.2 6.8 0.3 6.3L4.5 2.1Q5 1.6 5.5 1.6Z" fill="#e8762c"/><path d="M5.6 4V10.6M5.6 5.4L8.4 7.3" stroke="#3a1a05" stroke-width="1.1" fill="none"/><circle cx="5.6" cy="10.2" r="0.9" fill="#3a1a05"/><circle cx="8.4" cy="7.3" r="1" fill="#3a1a05"/></g></svg><div class="t" style="left:1521.5px;top:265px;color:#eee1bd;">.gitignore</div><svg class="i" style="left:1492px;top:281px" width="24" height="24"><g transform="translate(3 3)"><path d="M0 6.6H11.2Q11.8 5.2 12.8 5.2Q13.4 5.4 13.2 6.2Q12.4 6.8 11.8 7Q10.4 12 5 12Q1 12 0 6.6Z" fill="#2496ed"/><path d="M2 4.2H4V6.2H2ZM4.4 4.2H6.4V6.2H4.4ZM6.8 4.2H8.8V6.2H6.8ZM4.4 1.8H6.4V3.8H4.4ZM6.8 1.8H8.8V3.8H6.8ZM9.2 4.2H10.8V6.2H9.2Z" fill="#2496ed"/></g></svg><div class="t" style="left:1521.5px;top:284px;color:#d3869b;">.gitpod.Dockerfile</div><svg class="i" style="left:1492px;top:300px" width="24" height="24"><g transform="translate(3 3)"><path d="M0 0.8H5V2.5H0ZM1 3.6H6.8V5.4H1ZM2.8 6.6H6.5V8.4H2.8ZM8 6.6H13V8.4H8ZM2.8 9.2H7V11H2.8ZM8.8 9.2H14V11H8.8ZM1 12.4H6.8V14.2H1Z" fill="#e8a23a"/></g></svg><div class="t" style="left:1521.5px;top:303px;color:#d3869b;">.gitpod.yml</div><svg class="i" style="left:1492px;top:319px" width="24" height="24"><g transform="translate(3 3)"><path d="M0 0.2Q0 -1 1.2 -1H8.2V4.2Q8.2 5.4 9.4 5.4H14V14.1Q14 15.3 12.8 15.3H1.2Q0 15.3 0 14.1Z" fill="#e8bd82"/><path d="M9.6 -0.8L14 3.9H9.6Z" fill="#e8bd82"/></g></svg><div class="t" style="left:1521.5px;top:322px;color:#d3869b;">.prettierrc</div><svg class="i" style="left:1492px;top:338px" width="24" height="24"><g transform="translate(3 3)"><rect x="0" y="2" width="16" height="10" rx="0.8" fill="#9aa3a4"/><path d="M2 10.4V3.8H4L5.6 6.2L7.2 3.8H9.2V10.4H7.4V6.6L5.6 9L3.8 6.6V10.4Z" fill="#1f2a2e"/><path d="M11.2 3.8H13V7.2H14.6L12.1 10.6L9.6 7.2H11.2Z" fill="#1f2a2e"/></g></svg><div class="t" style="left:1521.5px;top:341px;color:#eee1bd;">CODE_OF_CONDUCT.md</div><svg class="i" style="left:1492px;top:357px" width="24" height="24"><g transform="translate(3 3)"><rect x="0" y="2" width="16" height="10" rx="0.8" fill="#9aa3a4"/><path d="M2 10.4V3.8H4L5.6 6.2L7.2 3.8H9.2V10.4H7.4V6.6L5.6 9L3.8 6.6V10.4Z" fill="#1f2a2e"/><path d="M11.2 3.8H13V7.2H14.6L12.1 10.6L9.6 7.2H11.2Z" fill="#1f2a2e"/></g></svg><div class="t" style="left:1521.5px;top:360px;color:#eee1bd;">CONTRIBUTING.md</div><svg class="i" style="left:1492px;top:376px" width="24" height="24"><g transform="translate(3 3)"><path d="M0 0.4Q0 -0.8 1.2 -0.8H8.8L14 4.4V14.3Q14 15.5 12.8 15.5H1.2Q0 15.5 0 14.3Z" fill="#939e9e"/><path d="M8.6 -0.6V4.6H13.8" fill="none" stroke="#282828" stroke-width="0.9"/><rect x="3" y="7.2" width="8" height="1.2" fill="#2a3838"/><rect x="3" y="9.6" width="8" height="1.2" fill="#2a3838"/><rect x="3" y="12" width="8" height="1.2" fill="#2a3838"/></g></svg><div class="t" style="left:1521.5px;top:379px;color:#eee1bd;">LICENSE.txt</div><svg class="i" style="left:1474px;top:395px" width="24" height="24"><g transform="translate(3 3)"><path d="M1.5 1.4L7.1 7.3L1.5 13.2" fill="none" stroke="#8ec07c" stroke-width="2.9" stroke-linejoin="miter"/></g></svg><svg class="i" style="left:1492px;top:395px" width="24" height="24"><g transform="translate(3 3)"><rect x="0" y="2" width="16" height="10" rx="0.8" fill="#9aa3a4"/><path d="M2 10.4V3.8H4L5.6 6.2L7.2 3.8H9.2V10.4H7.4V6.6L5.6 9L3.8 6.6V10.4Z" fill="#1f2a2e"/><path d="M11.2 3.8H13V7.2H14.6L12.1 10.6L9.6 7.2H11.2Z" fill="#1f2a2e"/></g></svg><div class="t" style="left:1521.5px;top:398px;color:#eee1bd;">README.md</div><svg class="i" style="left:1492px;top:414px" width="24" height="24"><g transform="translate(3 3)"><rect x="0" y="2" width="16" height="10" rx="0.8" fill="#9aa3a4"/><path d="M2 10.4V3.8H4L5.6 6.2L7.2 3.8H9.2V10.4H7.4V6.6L5.6 9L3.8 6.6V10.4Z" fill="#1f2a2e"/><path d="M11.2 3.8H13V7.2H14.6L12.1 10.6L9.6 7.2H11.2Z" fill="#1f2a2e"/></g></svg><div class="t" style="left:1521.5px;top:417px;color:#eee1bd;">SECURITY.md</div><svg class="i" style="left:1492px;top:433px" width="24" height="24"><g transform="translate(3 3)"><rect x="0.8" y="1" width="15" height="12.7" rx="1.6" fill="none" stroke="#4caf79" stroke-width="1.5"/><path d="M3.4 4.6L6.4 7.2L3.4 9.8" fill="none" stroke="#4caf79" stroke-width="1.5"/><rect x="7.4" y="9.4" width="5" height="1.4" fill="#4caf79"/></g></svg><div class="t" style="left:1521.5px;top:436px;color:#d3869b;">oh-my-zsh.sh</div><div class="r" style="left:1471px;top:805px;width:255px;height:3px;background:#fff5d6;"></div><div class="r" style="left:1804px;top:805px;width:21px;height:3px;background:#fff5d6;"></div><div class="r" style="left:1876px;top:805px;width:21px;height:3px;background:#fff5d6;"></div><div class="r" style="left:1723px;top:797px;width:3px;height:19px;background:#fff5d6;"></div><div class="r" style="left:1804px;top:797px;width:3px;height:19px;background:#fff5d6;"></div><div class="r" style="left:1822px;top:797px;width:3px;height:19px;background:#fff5d6;"></div><div class="r" style="left:1876px;top:797px;width:3px;height:19px;background:#fff5d6;"></div><svg class="i" style="left:1726px;top:794px" width="24" height="24"><g transform="translate(3 3)"><path d="M4 1.8Q4 0.8 5 0.8Q6 0.8 6 1.8V6.8L10.4 8.2Q11 8.4 11 9.2V13.6L10.4 14.3H4.6L0 9.8Q0.4 8.8 1.6 9.2L4 10.2Z" fill="#fff5d6"/></g></svg><div class="t" style="left:1746.5px;top:797px;color:#fff5d6;">Select</div><div class="t" style="left:1827.5px;top:797px;color:#fff5d6;">19/21</div><div class="r" style="left:4px;top:824px;width:21px;height:3px;background:#878787;"></div><div class="r" style="left:112px;top:824px;width:516px;height:3px;background:#878787;"></div><div class="r" style="left:22px;top:816px;width:3px;height:19px;background:#878787;"></div><div class="r" style="left:112px;top:816px;width:3px;height:19px;background:#878787;"></div><div class="t" style="left:27.5px;top:816px;color:#878787;">Processes</div><div class="r" style="left:4px;top:824px;width:3px;height:174px;background:#878787;"></div><div class="r" style="left:625px;top:824px;width:3px;height:174px;background:#878787;"></div><div class="r" style="left:4px;top:995px;width:570px;height:3px;background:#878787;"></div><div class="r" style="left:607px;top:995px;width:21px;height:3px;background:#878787;"></div><div class="r" style="left:571px;top:987px;width:3px;height:19px;background:#878787;"></div><div class="r" style="left:607px;top:987px;width:3px;height:19px;background:#878787;"></div><div class="t" style="left:576.5px;top:987px;color:#878787;">0/8</div><div class="r" style="left:634px;top:824px;width:21px;height:3px;background:#878787;"></div><div class="r" style="left:733px;top:824px;width:525px;height:3px;background:#878787;"></div><div class="r" style="left:652px;top:816px;width:3px;height:19px;background:#878787;"></div><div class="r" style="left:733px;top:816px;width:3px;height:19px;background:#878787;"></div><div class="t" style="left:657.5px;top:816px;color:#878787;">Metadata</div><div class="r" style="left:634px;top:824px;width:3px;height:174px;background:#878787;"></div><div class="r" style="left:1255px;top:824px;width:3px;height:174px;background:#878787;"></div><div class="r" style="left:634px;top:995px;width:561px;height:3px;background:#878787;"></div><div class="r" style="left:1237px;top:995px;width:21px;height:3px;background:#878787;"></div><div class="r" style="left:1192px;top:987px;width:3px;height:19px;background:#878787;"></div><div class="r" style="left:1237px;top:987px;width:3px;height:19px;background:#878787;"></div><div class="t" style="left:1197.5px;top:987px;color:#878787;">1/17</div><div class="r" style="left:1264px;top:824px;width:21px;height:3px;background:#878787;"></div><div class="r" style="left:1372px;top:824px;width:525px;height:3px;background:#878787;"></div><div class="r" style="left:1282px;top:816px;width:3px;height:19px;background:#878787;"></div><div class="r" style="left:1372px;top:816px;width:3px;height:19px;background:#878787;"></div><div class="t" style="left:1287.5px;top:816px;color:#878787;">Clipboard</div><div class="r" style="left:1264px;top:824px;width:3px;height:174px;background:#878787;"></div><div class="r" style="left:1894px;top:824px;width:3px;height:174px;background:#878787;"></div><div class="r" style="left:1264px;top:995px;width:633px;height:3px;background:#878787;"></div><div class="r" style="left:13px;top:835px;width:3px;height:38px;background:#8ec07c;"></div><svg class="i" style="left:25px;top:832px" width="24" height="24"><g transform="translate(3 3)"><path d="M0.6 10.5V1H9.3" fill="none" stroke="#ebdbb2" stroke-width="1.3"/><rect x="3.3" y="3.6" width="8.6" height="11" rx="0.6" fill="none" stroke="#ebdbb2" stroke-width="1.3"/></g></svg><div class="t" style="left:45.5px;top:835px;color:#eee1bd;">Game.of.Thrones.S02E02.mkv</div><svg class="i" style="left:286px;top:832px" width="24" height="24"><g transform="translate(3 3)"><circle cx="6.4" cy="7.3" r="6.7" fill="#458588"/><path d="M6.2 3.2V7.6L9.2 9.8" fill="none" stroke="#0d2a30" stroke-width="1.2"/></g></svg><div class="r" style="left:127px;top:854px;width:441px;height:19px;background:#383838;"></div><div class="r" style="left:28px;top:854px;width:9px;height:19px;background:#689d6a;"></div><div class="r" style="left:37px;top:854px;width:9px;height:19px;background:#839766;"></div><div class="r" style="left:46px;top:854px;width:9px;height:19px;background:#989062;"></div><div class="r" style="left:55px;top:854px;width:9px;height:19px;background:#a9895d;"></div><div class="r" style="left:64px;top:854px;width:9px;height:19px;background:#b98258;"></div><div class="r" style="left:73px;top:854px;width:9px;height:19px;background:#c67b53;"></div><div class="r" style="left:82px;top:854px;width:9px;height:19px;background:#d3734e;"></div><div class="r" style="left:91px;top:854px;width:9px;height:19px;background:#de6a49;"></div><div class="r" style="left:100px;top:854px;width:9px;height:19px;background:#e86042;"></div><div class="r" style="left:109px;top:854px;width:9px;height:19px;background:#f2563c;"></div><div class="r" style="left:118px;top:854px;width:9px;height:19px;background:#fb4934;"></div><div class="t" style="left:585.5px;top:854px;color:#eee1bd;">18%</div><svg class="i" style="left:25px;top:889px" width="24" height="24"><g transform="translate(3 3)"><rect x="0" y="1" width="9.7" height="1.6" rx="0.4" fill="#ebdbb2"/><rect x="3" y="0.2" width="3.6" height="1.2" fill="#ebdbb2"/><path d="M0.8 3.4H8.9V12.5Q8.9 13.7 7.7 13.7H2Q0.8 13.7 0.8 12.5Z" fill="#ebdbb2"/></g></svg><div class="t" style="left:45.5px;top:892px;color:#eee1bd;">dsa</div><svg class="i" style="left:79px;top:889px" width="24" height="24"><g transform="translate(3 3)"><circle cx="7.9" cy="7.2" r="8" fill="#8ec07c"/><path d="M4.4 7.4L6.8 9.6L11.4 5.2" fill="none" stroke="#1e3320" stroke-width="1.5"/></g></svg><div class="r" style="left:568px;top:911px;width:0px;height:19px;background:#383838;"></div><div class="r" style="left:28px;top:911px;width:9px;height:19px;background:#689d6a;"></div><div class="r" style="left:37px;top:911px;width:9px;height:19px;background:#6d9c69;"></div><div class="r" style="left:46px;top:911px;width:9px;height:19px;background:#729b69;"></div><div class="r" style="left:55px;top:911px;width:9px;height:19px;background:#779a68;"></div><div class="r" style="left:64px;top:911px;width:9px;height:19px;background:#7b9967;"></div><div class="r" style="left:73px;top:911px;width:9px;height:19px;background:#7f9866;"></div><div class="r" style="left:82px;top:911px;width:9px;height:19px;background:#839766;"></div><div class="r" style="left:91px;top:911px;width:9px;height:19px;background:#879665;"></div><div class="r" style="left:100px;top:911px;width:9px;height:19px;background:#8b9464;"></div><div class="r" style="left:109px;top:911px;width:9px;height:19px;background:#8e9364;"></div><div class="r" style="left:118px;top:911px;width:9px;height:19px;background:#929263;"></div><div class="r" style="left:127px;top:911px;width:9px;height:19px;background:#959162;"></div><div class="r" style="left:136px;top:911px;width:9px;height:19px;background:#999061;"></div><div class="r" style="left:145px;top:911px;width:9px;height:19px;background:#9c8f61;"></div><div class="r" style="left:154px;top:911px;width:9px;height:19px;background:#9f8e60;"></div><div class="r" style="left:163px;top:911px;width:9px;height:19px;background:#a28d5f;"></div><div class="r" style="left:172px;top:911px;width:9px;height:19px;background:#a58b5e;"></div><div class="r" style="left:181px;top:911px;width:9px;height:19px;background:#a78a5e;"></div><div class="r" style="left:190px;top:911px;width:9px;height:19px;background:#aa895d;"></div><div class="r" style="left:199px;top:911px;width:9px;height:19px;background:#ad885c;"></div><div class="r" style="left:208px;top:911px;width:9px;height:19px;background:#b0875b;"></div><div class="r" style="left:217px;top:911px;width:9px;height:19px;background:#b2865a;"></div><div class="r" style="left:226px;top:911px;width:9px;height:19px;background:#b5845a;"></div><div class="r" style="left:235px;top:911px;width:9px;height:19px;background:#b78359;"></div><div class="r" style="left:244px;top:911px;width:9px;height:19px;background:#ba8258;"></div><div class="r" style="left:253px;top:911px;width:9px;height:19px;background:#bc8157;"></div><div class="r" style="left:262px;top:911px;width:9px;height:19px;background:#be7f56;"></div><div class="r" style="left:271px;top:911px;width:9px;height:19px;background:#c17e56;"></div><div class="r" style="left:280px;top:911px;width:9px;height:19px;background:#c37d55;"></div><div class="r" style="left:289px;top:911px;width:9px;height:19px;background:#c57b54;"></div><div class="r" style="left:298px;top:911px;width:9px;height:19px;background:#c77a53;"></div><div class="r" style="left:307px;top:911px;width:9px;height:19px;background:#ca7952;"></div><div class="r" style="left:316px;top:911px;width:9px;height:19px;background:#cc7751;"></div><div class="r" style="left:325px;top:911px;width:9px;height:19px;background:#ce7650;"></div><div class="r" style="left:334px;top:911px;width:9px;height:19px;background:#d0754f;"></div><div class="r" style="left:343px;top:911px;width:9px;height:19px;background:#d2734f;"></div><div class="r" style="left:352px;top:911px;width:9px;height:19px;background:#d4724e;"></div><div class="r" style="left:361px;top:911px;width:9px;height:19px;background:#d6704d;"></div><div class="r" style="left:370px;top:911px;width:9px;height:19px;background:#d86f4c;"></div><div class="r" style="left:379px;top:911px;width:9px;height:19px;background:#da6d4b;"></div><div class="r" style="left:388px;top:911px;width:9px;height:19px;background:#db6c4a;"></div><div class="r" style="left:397px;top:911px;width:9px;height:19px;background:#dd6a49;"></div><div class="r" style="left:406px;top:911px;width:9px;height:19px;background:#df6948;"></div><div class="r" style="left:415px;top:911px;width:9px;height:19px;background:#e16747;"></div><div class="r" style="left:424px;top:911px;width:9px;height:19px;background:#e36646;"></div><div class="r" style="left:433px;top:911px;width:9px;height:19px;background:#e46445;"></div><div class="r" style="left:442px;top:911px;width:9px;height:19px;background:#e66244;"></div><div class="r" style="left:451px;top:911px;width:9px;height:19px;background:#e86143;"></div><div class="r" style="left:460px;top:911px;width:9px;height:19px;background:#ea5f42;"></div><div class="r" style="left:469px;top:911px;width:9px;height:19px;background:#eb5d40;"></div><div class="r" style="left:478px;top:911px;width:9px;height:19px;background:#ed5b3f;"></div><div class="r" style="left:487px;top:911px;width:9px;height:19px;background:#ef5a3e;"></div><div class="r" style="left:496px;top:911px;width:9px;height:19px;background:#f0583d;"></div><div class="r" style="left:505px;top:911px;width:9px;height:19px;background:#f2563c;"></div><div class="r" style="left:514px;top:911px;width:9px;height:19px;background:#f3543b;"></div><div class="r" style="left:523px;top:911px;width:9px;height:19px;background:#f55239;"></div><div class="r" style="left:532px;top:911px;width:9px;height:19px;background:#f65038;"></div><div class="r" style="left:541px;top:911px;width:9px;height:19px;background:#f84e37;"></div><div class="r" style="left:550px;top:911px;width:9px;height:19px;background:#fa4b35;"></div><div class="r" style="left:559px;top:911px;width:9px;height:19px;background:#fb4934;"></div><div class="t" style="left:576.5px;top:911px;color:#eee1bd;">100%</div><svg class="i" style="left:25px;top:946px" width="24" height="24"><g transform="translate(3 3)"><circle cx="2.6" cy="3.6" r="2" fill="none" stroke="#ebdbb2" stroke-width="1.3"/><circle cx="2.6" cy="11.4" r="2" fill="none" stroke="#ebdbb2" stroke-width="1.3"/><path d="M4.2 4.8L13 13.6M4.2 10.2L13 1.4" fill="none" stroke="#ebdbb2" stroke-width="1.4"/></g></svg><div class="t" style="left:45.5px;top:949px;color:#eee1bd;">gdk-pixbuf2-2.42.10-2.fc38.x86_64(1).rpm</div><svg class="i" style="left:412px;top:946px" width="24" height="24"><g transform="translate(3 3)"><circle cx="7.9" cy="7.2" r="8" fill="#8ec07c"/><path d="M4.4 7.4L6.8 9.6L11.4 5.2" fill="none" stroke="#1e3320" stroke-width="1.5"/></g></svg><div class="r" style="left:568px;top:968px;width:0px;height:19px;background:#383838;"></div><div class="r" style="left:28px;top:968px;width:9px;height:19px;background:#689d6a;"></div><div class="r" style="left:37px;top:968px;width:9px;height:19px;background:#6d9c69;"></div><div class="r" style="left:46px;top:968px;width:9px;height:19px;background:#729b69;"></div><div class="r" style="left:55px;top:968px;width:9px;height:19px;background:#779a68;"></div><div class="r" style="left:64px;top:968px;width:9px;height:19px;background:#7b9967;"></div><div class="r" style="left:73px;top:968px;width:9px;height:19px;background:#7f9866;"></div><div class="r" style="left:82px;top:968px;width:9px;height:19px;background:#839766;"></div><div class="r" style="left:91px;top:968px;width:9px;height:19px;background:#879665;"></div><div class="r" style="left:100px;top:968px;width:9px;height:19px;background:#8b9464;"></div><div class="r" style="left:109px;top:968px;width:9px;height:19px;background:#8e9364;"></div><div class="r" style="left:118px;top:968px;width:9px;height:19px;background:#929263;"></div><div class="r" style="left:127px;top:968px;width:9px;height:19px;background:#959162;"></div><div class="r" style="left:136px;top:968px;width:9px;height:19px;background:#999061;"></div><div class="r" style="left:145px;top:968px;width:9px;height:19px;background:#9c8f61;"></div><div class="r" style="left:154px;top:968px;width:9px;height:19px;background:#9f8e60;"></div><div class="r" style="left:163px;top:968px;width:9px;height:19px;background:#a28d5f;"></div><div class="r" style="left:172px;top:968px;width:9px;height:19px;background:#a58b5e;"></div><div class="r" style="left:181px;top:968px;width:9px;height:19px;background:#a78a5e;"></div><div class="r" style="left:190px;top:968px;width:9px;height:19px;background:#aa895d;"></div><div class="r" style="left:199px;top:968px;width:9px;height:19px;background:#ad885c;"></div><div class="r" style="left:208px;top:968px;width:9px;height:19px;background:#b0875b;"></div><div class="r" style="left:217px;top:968px;width:9px;height:19px;background:#b2865a;"></div><div class="r" style="left:226px;top:968px;width:9px;height:19px;background:#b5845a;"></div><div class="r" style="left:235px;top:968px;width:9px;height:19px;background:#b78359;"></div><div class="r" style="left:244px;top:968px;width:9px;height:19px;background:#ba8258;"></div><div class="r" style="left:253px;top:968px;width:9px;height:19px;background:#bc8157;"></div><div class="r" style="left:262px;top:968px;width:9px;height:19px;background:#be7f56;"></div><div class="r" style="left:271px;top:968px;width:9px;height:19px;background:#c17e56;"></div><div class="r" style="left:280px;top:968px;width:9px;height:19px;background:#c37d55;"></div><div class="r" style="left:289px;top:968px;width:9px;height:19px;background:#c57b54;"></div><div class="r" style="left:298px;top:968px;width:9px;height:19px;background:#c77a53;"></div><div class="r" style="left:307px;top:968px;width:9px;height:19px;background:#ca7952;"></div><div class="r" style="left:316px;top:968px;width:9px;height:19px;background:#cc7751;"></div><div class="r" style="left:325px;top:968px;width:9px;height:19px;background:#ce7650;"></div><div class="r" style="left:334px;top:968px;width:9px;height:19px;background:#d0754f;"></div><div class="r" style="left:343px;top:968px;width:9px;height:19px;background:#d2734f;"></div><div class="r" style="left:352px;top:968px;width:9px;height:19px;background:#d4724e;"></div><div class="r" style="left:361px;top:968px;width:9px;height:19px;background:#d6704d;"></div><div class="r" style="left:370px;top:968px;width:9px;height:19px;background:#d86f4c;"></div><div class="r" style="left:379px;top:968px;width:9px;height:19px;background:#da6d4b;"></div><div class="r" style="left:388px;top:968px;width:9px;height:19px;background:#db6c4a;"></div><div class="r" style="left:397px;top:968px;width:9px;height:19px;background:#dd6a49;"></div><div class="r" style="left:406px;top:968px;width:9px;height:19px;background:#df6948;"></div><div class="r" style="left:415px;top:968px;width:9px;height:19px;background:#e16747;"></div><div class="r" style="left:424px;top:968px;width:9px;height:19px;background:#e36646;"></div><div class="r" style="left:433px;top:968px;width:9px;height:19px;background:#e46445;"></div><div class="r" style="left:442px;top:968px;width:9px;height:19px;background:#e66244;"></div><div class="r" style="left:451px;top:968px;width:9px;height:19px;background:#e86143;"></div><div class="r" style="left:460px;top:968px;width:9px;height:19px;background:#ea5f42;"></div><div class="r" style="left:469px;top:968px;width:9px;height:19px;background:#eb5d40;"></div><div class="r" style="left:478px;top:968px;width:9px;height:19px;background:#ed5b3f;"></div><div class="r" style="left:487px;top:968px;width:9px;height:19px;background:#ef5a3e;"></div><div class="r" style="left:496px;top:968px;width:9px;height:19px;background:#f0583d;"></div><div class="r" style="left:505px;top:968px;width:9px;height:19px;background:#f2563c;"></div><div class="r" style="left:514px;top:968px;width:9px;height:19px;background:#f3543b;"></div><div class="r" style="left:523px;top:968px;width:9px;height:19px;background:#f55239;"></div><div class="r" style="left:532px;top:968px;width:9px;height:19px;background:#f65038;"></div><div class="r" style="left:541px;top:968px;width:9px;height:19px;background:#f84e37;"></div><div class="r" style="left:550px;top:968px;width:9px;height:19px;background:#fa4b35;"></div><div class="r" style="left:559px;top:968px;width:9px;height:19px;background:#fb4934;"></div><div class="t" style="left:576.5px;top:968px;color:#eee1bd;">100%</div><div class="t b" style="left:639.5px;top:835px;color:#eee1bd;">FileName</div><div class="t b" style="left:828.5px;top:835px;color:#eee1bd;">README.md</div><div class="t b" style="left:639.5px;top:854px;color:#eee1bd;">FileSize</div><div class="t b" style="left:828.5px;top:854px;color:#eee1bd;">19 kB</div><div class="t b" style="left:639.5px;top:873px;color:#eee1bd;">FileModifyDate</div><div class="t b" style="left:828.5px;top:873px;color:#eee1bd;">2024:03:21 00:20:21+08:00</div><div class="t b" style="left:639.5px;top:892px;color:#eee1bd;">FileAccessDate</div><div class="t b" style="left:828.5px;top:892px;color:#eee1bd;">2024:04:06 21:33:39+08:00</div><div class="t b" style="left:639.5px;top:911px;color:#eee1bd;">ByteOrderMark</div><div class="t b" style="left:828.5px;top:911px;color:#eee1bd;">No</div><div class="t b" style="left:639.5px;top:930px;color:#eee1bd;">Directory</div><div class="t b" style="left:828.5px;top:930px;color:#eee1bd;">/home/nightcat/.oh-my-zsh</div><div class="t b" style="left:639.5px;top:949px;color:#eee1bd;">ExifToolVersion</div><div class="t b" style="left:828.5px;top:949px;color:#eee1bd;">12.7</div><div class="t b" style="left:639.5px;top:968px;color:#eee1bd;">FileInodeChangeDate</div><div class="t b" style="left:828.5px;top:968px;color:#eee1bd;">2024:03:21 00:20:21+08:00</div><svg class="i" style="left:1267px;top:832px" width="24" height="24"><g transform="translate(3 3)"><path d="M0 6.6H11.2Q11.8 5.2 12.8 5.2Q13.4 5.4 13.2 6.2Q12.4 6.8 11.8 7Q10.4 12 5 12Q1 12 0 6.6Z" fill="#2496ed"/><path d="M2 4.2H4V6.2H2ZM4.4 4.2H6.4V6.2H4.4ZM6.8 4.2H8.8V6.2H6.8ZM4.4 1.8H6.4V3.8H4.4ZM6.8 1.8H8.8V3.8H6.8ZM9.2 4.2H10.8V6.2H9.2Z" fill="#2496ed"/></g></svg><div class="t" style="left:1296.5px;top:835px;color:#eee1bd;">/home/nightcat/.oh-my-zsh/.gitpod.Dockerfile</div><svg class="i" style="left:1267px;top:851px" width="24" height="24"><g transform="translate(3 3)"><path d="M0 0.8H5V2.5H0ZM1 3.6H6.8V5.4H1ZM2.8 6.6H6.5V8.4H2.8ZM8 6.6H13V8.4H8ZM2.8 9.2H7V11H2.8ZM8.8 9.2H14V11H8.8ZM1 12.4H6.8V14.2H1Z" fill="#e8a23a"/></g></svg><div class="t" style="left:1296.5px;top:854px;color:#eee1bd;">/home/nightcat/.oh-my-zsh/.gitpod.yml</div><svg class="i" style="left:1267px;top:870px" width="24" height="24"><g transform="translate(3 3)"><path d="M0 0.2Q0 -1 1.2 -1H8.2V4.2Q8.2 5.4 9.4 5.4H14V14.1Q14 15.3 12.8 15.3H1.2Q0 15.3 0 14.1Z" fill="#e8bd82"/><path d="M9.6 -0.8L14 3.9H9.6Z" fill="#e8bd82"/></g></svg><div class="t" style="left:1296.5px;top:873px;color:#eee1bd;">/home/nightcat/.oh-my-zsh/.prettierrc</div><svg class="i" style="left:1267px;top:889px" width="24" height="24"><g transform="translate(3 3)"><rect x="0.8" y="1" width="15" height="12.7" rx="1.6" fill="none" stroke="#4caf79" stroke-width="1.5"/><path d="M3.4 4.6L6.4 7.2L3.4 9.8" fill="none" stroke="#4caf79" stroke-width="1.5"/><rect x="7.4" y="9.4" width="5" height="1.4" fill="#4caf79"/></g></svg><div class="t" style="left:1296.5px;top:892px;color:#eee1bd;">/home/nightcat/.oh-my-zsh/oh-my-zsh.sh</div><svg class="i" style="left:1267px;top:908px" width="24" height="24"><g transform="translate(3 3)"><path d="M11.94 5.07 L13.89 5.77 L13.89 8.23 L11.94 8.93 L11.86 9.12 L12.74 11.00 L11.00 12.74 L9.12 11.86 L8.93 11.94 L8.23 13.89 L5.77 13.89 L5.07 11.94 L4.88 11.86 L3.00 12.74 L1.26 11.00 L2.14 9.12 L2.06 8.93 L0.11 8.23 L0.11 5.77 L2.06 5.07 L2.14 4.88 L1.26 3.00 L3.00 1.26 L4.88 2.14 L5.07 2.06 L5.77 0.11 L8.23 0.11 L8.93 2.06 L9.12 2.14 L11.00 1.26 L12.74 3.00 L11.86 4.88Z" fill="#8c8c8c"/><circle cx="7" cy="7" r="2.6" fill="#282828"/></g></svg><div class="t" style="left:1296.5px;top:911px;color:#eee1bd;">/home/nightcat/.oh-my-zsh/.editorconfig</div><svg class="i" style="left:1267px;top:927px" width="24" height="24"><g transform="translate(3 3)"><path d="M0 2.3Q0 1 1.3 1H5.6L7.3 2.8H13.7Q15 2.8 15 4.1V12.7Q15 14 13.7 14H1.3Q0 14 0 12.7Z" fill="#ebdbb2"/></g></svg><div class="t b" style="left:1296.5px;top:930px;color:#eee1bd;">/home/nightcat/.oh-my-zsh/.git</div><svg class="i" style="left:1267px;top:946px" width="24" height="24"><g transform="translate(3 3)"><path d="M0 2.3Q0 1 1.3 1H5.6L7.3 2.8H13.7Q15 2.8 15 4.1V12.7Q15 14 13.7 14H1.3Q0 14 0 12.7Z" fill="#ebdbb2"/></g></svg><div class="t b" style="left:1296.5px;top:949px;color:#eee1bd;">/home/nightcat/.oh-my-zsh/.github</div><div class="t b" style="left:1269.5px;top:968px;color:#eee1bd;">2 item left....</div>
</body></html>
